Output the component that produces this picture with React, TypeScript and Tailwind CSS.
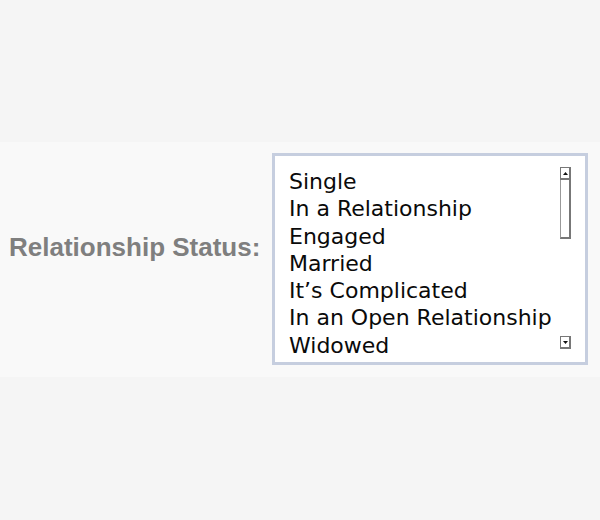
const options = [
  "Single",
  "In a Relationship",
  "Engaged",
  "Married",
  "It\u2019s Complicated",
  "In an Open Relationship",
  "Widowed",
];

function ScrollButton({ dir }: { dir: "up" | "down" }) {
  return (
    <div className="w-[11px] h-[13px] bg-white border border-[#777] border-b-2 border-r-2 flex items-center justify-center">
      <svg width="5" height="3" viewBox="0 0 5 3">
        {dir === "up" ? (
          <polygon points="2.5,0 5,3 0,3" fill="#111" />
        ) : (
          <polygon points="0,0 5,0 2.5,3" fill="#111" />
        )}
      </svg>
    </div>
  );
}

export default function App() {
  return (
    <div className="w-[600px] h-[520px] bg-[#f5f5f5] pt-[142px]">
      <div className="h-[235px] bg-[#f9f9f9] flex pl-[9px]">
        <div
          className="w-[263px] pt-[92px] text-[26px] font-bold text-[#7f7f7f] leading-none"
          style={{ fontFamily: '"Liberation Sans", Arial, sans-serif' }}
        >
          Relationship Status:
        </div>
        <div className="mt-[11px] w-[316px] h-[212px] border-[3px] border-[#c6cedf] bg-white flex">
          <ul
            className="flex-1 pl-[14px] pt-[12px] text-[22px] leading-[27.3px] text-[#0a0a0a]"
            style={{ fontFamily: '"DejaVu Sans", "Lucida Grande", sans-serif' }}
          >
            {options.map((o) => (
              <li key={o}>{o}</li>
            ))}
          </ul>
          <div className="w-[12px] mr-[13px] pt-[11px] pb-[13px] flex flex-col justify-between">
            <div className="flex flex-col">
              <ScrollButton dir="up" />
              <div className="w-[11px] h-[59px] border-r-2 border-b-2 border-[#777] border-l border-l-[#999] bg-white" />
            </div>
            <ScrollButton dir="down" />
          </div>
        </div>
      </div>
    </div>
  );
}
